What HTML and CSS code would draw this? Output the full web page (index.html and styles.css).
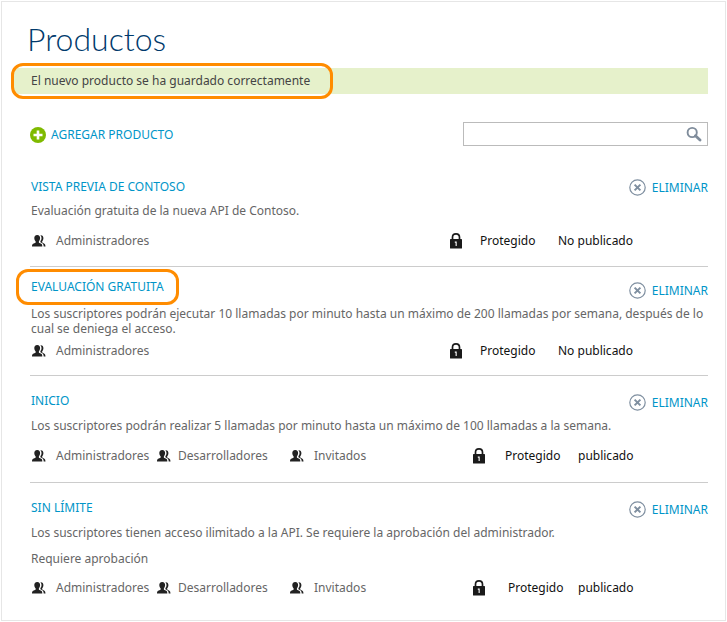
FILE: index.html
```html
<!DOCTYPE html>
<html lang="es">
<head>
<meta charset="utf-8">
<title>Productos</title>
<link rel="stylesheet" href="styles.css">
</head>
<body>
<svg class="sprite" aria-hidden="true">
  <symbol id="people" viewBox="0 0 14 12">
    <path d="M5.2 0C7.300 0 8.200 1.300 8.100 3.200 8 4.700 7.500 5.500 6.900 6.200V7.800L9.200 8.700C10 9.100 10.300 9.800 10.300 11.500H0C0 9.900.3 9.100 1.100 8.700L3.600 7.800V6.200C2.900 5.500 2.400 4.700 2.300 3.200 2.200 1.300 3.200 0 5.200 0Z"/>
    <path d="M8.300.2C10.400-.1 11.500 1.200 11.400 3.200 11.300 4.700 10.900 5.500 10.200 6.200V7.400L12 8.400C13 9 13.400 9.700 13.500 11.500H11.700C11.600 9.700 11.200 8.700 10.300 8.200L8.400 7.200V6.100C9.100 5.300 9.500 4.400 9.500 3 9.500 1.700 9.100.8 8.300.2Z"/>
  </symbol>
  <symbol id="lock" viewBox="0 0 12 16">
    <path d="M2.500 7V4.300C2.500 2 4 .9 6 .9S9.500 2 9.500 4.300V7" fill="none" stroke="currentColor" stroke-width="1.700"/>
    <rect y="6" width="12" height="9.500" rx=".6"/>
    <path d="M4.800 8.600H6.700V13H5.600V9.700H4.800Z" fill="#fff"/>
  </symbol>
  <symbol id="remove" viewBox="0 0 17 17">
    <circle cx="8.500" cy="8.500" r="7.700" fill="none" stroke="currentColor" stroke-width="1.200"/>
    <path d="M5.600 5.600L11.400 11.400M11.400 5.600L5.600 11.400" fill="none" stroke="currentColor" stroke-width="2"/>
  </symbol>
</svg>
<main class="panel">
  <h1 class="title">Productos</h1>
  <p class="notice" role="status"><span class="mark mark-notice">El nuevo producto se ha guardado correctamente</span></p>

  <div class="toolbar">
    <a class="add" href="#agregar">
      <svg class="add-icon" viewBox="0 0 16 16" aria-hidden="true"><circle cx="8" cy="8" r="8" fill="#7fba00"/><path d="M8 3.500V12.500M3.500 8H12.500" stroke="#fff" stroke-width="2.600"/></svg>
      AGREGAR PRODUCTO
    </a>
    <form class="search" role="search">
      <input class="search-input" type="search" aria-label="Buscar productos">
      <button class="search-button" type="button" aria-label="Buscar">
        <svg class="search-icon" viewBox="0 0 16 16" aria-hidden="true"><circle cx="6.200" cy="6.500" r="4.600" fill="none" stroke="currentColor" stroke-width="1.900"/><path d="M9.500 9.800L14 14.100" stroke="currentColor" stroke-width="2.800" stroke-linecap="round"/></svg>
      </button>
    </form>
  </div>

  <ul class="products">
    <li class="product">
      <div class="head">
        <a class="name" href="#contoso">VISTA PREVIA DE CONTOSO</a>
        <button class="remove" type="button"><svg class="remove-icon" aria-hidden="true"><use href="#remove"/></svg>ELIMINAR</button>
      </div>
      <p class="text">Evaluación gratuita de la nueva API de Contoso.</p>
      <div class="meta">
        <ul class="roles">
          <li class="role"><svg class="people" aria-hidden="true"><use href="#people"/></svg>Administradores</li>
        </ul>
        <div class="status draft"><svg class="lock" aria-hidden="true"><use href="#lock"/></svg><span>Protegido</span><span class="state">No publicado</span></div>
      </div>
    </li>
    <li class="product compact">
      <div class="head">
        <a class="name mark mark-name" href="#evaluacion">EVALUACIÓN GRATUITA</a>
        <button class="remove" type="button"><svg class="remove-icon" aria-hidden="true"><use href="#remove"/></svg>ELIMINAR</button>
      </div>
      <p class="text">Los suscriptores podrán ejecutar 10 llamadas por minuto hasta un máximo de 200 llamadas por semana, después de lo cual se deniega el acceso.</p>
      <div class="meta">
        <ul class="roles">
          <li class="role"><svg class="people" aria-hidden="true"><use href="#people"/></svg>Administradores</li>
        </ul>
        <div class="status draft"><svg class="lock" aria-hidden="true"><use href="#lock"/></svg><span>Protegido</span><span class="state">No publicado</span></div>
      </div>
    </li>
    <li class="product spaced">
      <div class="head">
        <a class="name" href="#inicio">INICIO</a>
        <button class="remove" type="button"><svg class="remove-icon" aria-hidden="true"><use href="#remove"/></svg>ELIMINAR</button>
      </div>
      <p class="text">Los suscriptores podrán realizar 5 llamadas por minuto hasta un máximo de 100 llamadas a la semana.</p>
      <div class="meta">
        <ul class="roles">
          <li class="role"><svg class="people" aria-hidden="true"><use href="#people"/></svg>Administradores</li>
          <li class="role"><svg class="people" aria-hidden="true"><use href="#people"/></svg>Desarrolladores</li>
          <li class="role"><svg class="people" aria-hidden="true"><use href="#people"/></svg>Invitados</li>
        </ul>
        <div class="status"><svg class="lock" aria-hidden="true"><use href="#lock"/></svg><span>Protegido</span><span class="state">publicado</span></div>
      </div>
    </li>
    <li class="product spaced">
      <div class="head">
        <a class="name" href="#sin-limite">SIN LÍMITE</a>
        <button class="remove" type="button"><svg class="remove-icon" aria-hidden="true"><use href="#remove"/></svg>ELIMINAR</button>
      </div>
      <p class="text">Los suscriptores tienen acceso ilimitado a la API. Se requiere la aprobación del administrador.</p>
      <p class="text approval">Requiere aprobación</p>
      <div class="meta">
        <ul class="roles">
          <li class="role"><svg class="people" aria-hidden="true"><use href="#people"/></svg>Administradores</li>
          <li class="role"><svg class="people" aria-hidden="true"><use href="#people"/></svg>Desarrolladores</li>
          <li class="role"><svg class="people" aria-hidden="true"><use href="#people"/></svg>Invitados</li>
        </ul>
        <div class="status reviewed"><svg class="lock" aria-hidden="true"><use href="#lock"/></svg><span>Protegido</span><span class="state">publicado</span></div>
      </div>
    </li>
  </ul>
</main>
</body>
</html>
```
FILE: styles.css
```css
* { box-sizing: border-box; }
body {
  margin: 1px;
  background: #fff;
  color: #666;
  font-family: "Noto Sans", "Open Sans", sans-serif;
  font-size: 12px;
  line-height: 16px;
}
h1, p, ul { margin: 0; padding: 0; }
ul { list-style: none; }
a { color: #0095c8; text-decoration: none; }
button, input { font: inherit; }
svg { display: block; flex: none; fill: currentColor; }
.sprite { position: absolute; width: 0; height: 0; }

.panel {
  border: 1px solid #e6e6e6;
  padding: 16px 17px 6px 28px;
}
.title {
  margin-left: -3px;
  color: #003a6c;
  font-family: Lato, "Open Sans", sans-serif;
  font-size: 32px;
  font-weight: 300;
  line-height: 42px;
}
.notice {
  margin: 8px 0 0 -16px;
  padding: 5px 0 5px 17px;
  background: #e6f1cb;
  color: #444;
}
.mark { position: relative; }
.mark::after {
  content: "";
  position: absolute;
  border: 3px solid #ff8c00;
  border-radius: 12px;
  pointer-events: none;
}
.mark-notice::after { inset: -9px -23px -10px -20px; }
.mark-name::after { inset: -10px -15px -10px -15px; }

.toolbar {
  display: flex;
  justify-content: space-between;
  align-items: center;
  margin-top: 28px;
}
.add { display: flex; align-items: center; gap: 5px; padding-top: 2px; }
.add-icon { width: 16px; height: 16px; }
.search {
  display: flex;
  align-items: center;
  width: 245px;
  height: 24px;
  border: 1px solid #bbb;
}
.search-input { flex: 1; min-width: 0; border: 0; padding: 0 6px; outline: 0; background: none; }
.search-button { border: 0; padding: 0 5px; background: none; color: #7f8c9b; }
.search-icon { width: 16px; height: 16px; }

.products { margin-top: 21px; }
.product { padding: 12px 0 17px; }
.product + .product { border-top: 1px solid #ccc; }
.head { display: flex; justify-content: space-between; align-items: flex-start; padding-left: 1px; }
.remove {
  display: flex;
  align-items: center;
  gap: 6px;
  height: 17px;
  border: 0;
  padding: 0;
  background: none;
  color: #0095c8;
}
.remove-icon { width: 17px; height: 17px; color: #7f8fa0; }
.text { margin-top: 7px; padding-left: 1px; }
.meta {
  display: flex;
  justify-content: space-between;
  align-items: center;
  margin-top: 14px;
  padding: 0 73px 0 2px;
}
.roles { display: grid; grid-template-columns: 125px 133px auto; }
.role { display: flex; align-items: center; gap: 10px; }
.role:nth-child(2) { gap: 7px; }
.people { width: 14px; height: 12px; color: #222; }
.status {
  display: grid;
  grid-template-columns: 32px 73px 57px;
  align-items: center;
  color: #111;
  white-space: nowrap;
}
.draft { grid-template-columns: 30px 78px 77px; }
.reviewed { grid-template-columns: 35px 70px 57px; }
.lock { width: 12px; height: 16px; color: #1a1a1a; }

.compact { padding-bottom: 16px; }
.compact .text { margin-top: 7px; line-height: 15px; }
.compact .meta { margin-top: 7px; }
.compact .remove { margin-top: 3px; }
.spaced { padding-top: 17px; padding-bottom: 18px; }
.spaced .remove { margin-top: 1px; }
.approval { margin-top: 10px; }
.approval + .meta { margin-top: 13px; }
```
